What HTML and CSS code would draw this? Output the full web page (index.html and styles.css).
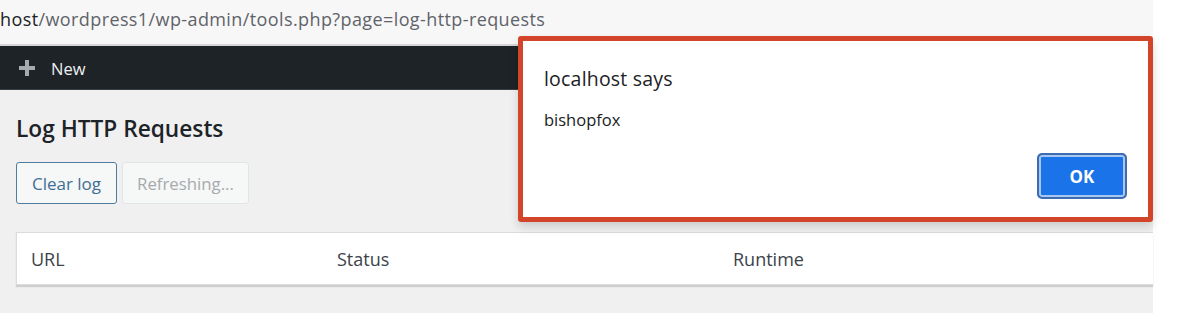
FILE: index.html
```html
<!DOCTYPE html>
<html>
<head>
<meta charset="utf-8">
<link rel="stylesheet" href="styles.css">
</head>
<body>
<div class="screen">
  <div class="page">
    <div class="urlbar"><span class="host">host</span><span class="path">/wordpress1/wp-admin/tools.php?page=log-http-requests</span></div>
    <div class="adminbar">
      <svg class="plus" width="18" height="18" viewBox="0 0 18 18"><path d="M7 1h4v6h6v4h-6v6H7v-6H1V7h6z" fill="#a7aaad"/></svg>
      <span class="new">New</span>
    </div>
    <div class="content">
      <h1 class="title">Log HTTP Requests</h1>
      <div class="actions">
        <button class="btn btn-clear">Clear log</button>
        <button class="btn btn-refresh">Refreshing...</button>
      </div>
      <div class="table">
        <div class="col col-url">URL</div>
        <div class="col col-status">Status</div>
        <div class="col col-runtime">Runtime</div>
      </div>
    </div>
  </div>
  <div class="dialog">
    <div class="dlg-title">localhost says</div>
    <div class="dlg-msg">bishopfox</div>
    <div class="dlg-foot"><button class="ok">OK</button></div>
  </div>
</div>
</body>
</html>
```
FILE: styles.css
```css
html, body { margin: 0; padding: 0; background: #ffffff; }
body { width: 1177px; height: 319px; overflow: hidden; font-family: "Open Sans", "Noto Sans", sans-serif; }
.screen { position: relative; width: 1177px; height: 319px; }
.page { width: 1153px; height: 313px; background: #f0f0f1; display: flex; flex-direction: column; }
.urlbar { height: 46px; box-sizing: border-box; background: #f7f7f8; border-bottom: 2px solid #d6d6d8; font-size: 18px; line-height: 38px; letter-spacing: 0.4px; white-space: nowrap; }
.host { color: #202124; }
.path { color: #5f6368; }
.adminbar { height: 43px; background: #1d2327; display: flex; align-items: center; padding-left: 18px; border-bottom: 1px solid #3a3e42; }
.plus { display: block; margin-right: 15px; }
.new { color: #f0f0f1; font-size: 16.5px; font-weight: 500; padding-top: 2px; }
.content { padding: 0 0 0 16px; display: flex; flex-direction: column; }
.title { margin: 24px 0 0; font-size: 22.7px; font-weight: 600; color: #1d2327; line-height: 30px; }
.actions { display: flex; gap: 5px; margin-top: 18px; }
.btn { height: 42px; box-sizing: border-box; border-radius: 3px; font-family: "Open Sans", "Noto Sans", sans-serif; font-size: 17px; padding: 0; background: #f6f7f7; }
.btn-clear { width: 101px; border: 1.5px solid #4f7da0; color: #3f6e94; }
.btn-refresh { width: 127px; border: 1px solid #e2e4e7; color: #a7aaad; font-size: 16.8px; }
.table { margin-top: 28px; height: 53px; box-sizing: border-box; background: #ffffff; border: 1px solid #dcdcde; border-right: none; box-shadow: 0 2px 1px #cfcfd0; display: flex; align-items: center; font-size: 18px; color: #3c434a; }
.col { padding-left: 14px; box-sizing: border-box; }
.col-url { width: 306px; }
.col-status { width: 396px; }
.dialog { position: absolute; left: 518px; top: 36px; width: 635px; height: 186px; box-sizing: border-box; background: #ffffff; border: 5px solid #d2452a; border-radius: 3px; box-shadow: 0 5px 10px rgba(0,0,0,0.15); display: flex; flex-direction: column; padding: 0 21px 0 21px; }
.dlg-title { margin-top: 25px; font-size: 19.5px; color: #202124; line-height: 26px; letter-spacing: 0.2px; }
.dlg-msg { margin-top: 17px; font-size: 16.5px; color: #202124; line-height: 22px; }
.dlg-foot { display: flex; justify-content: flex-end; margin-top: 22px; }
.ok { width: 90px; height: 46px; box-sizing: border-box; background: #1a73e8; border: 2px solid #3d6cb0; box-shadow: inset 0 0 0 2px #a8c7f0; border-radius: 5px; color: #ffffff; font-family: "Open Sans", "Noto Sans", sans-serif; font-weight: 700; font-size: 17px; }
```
